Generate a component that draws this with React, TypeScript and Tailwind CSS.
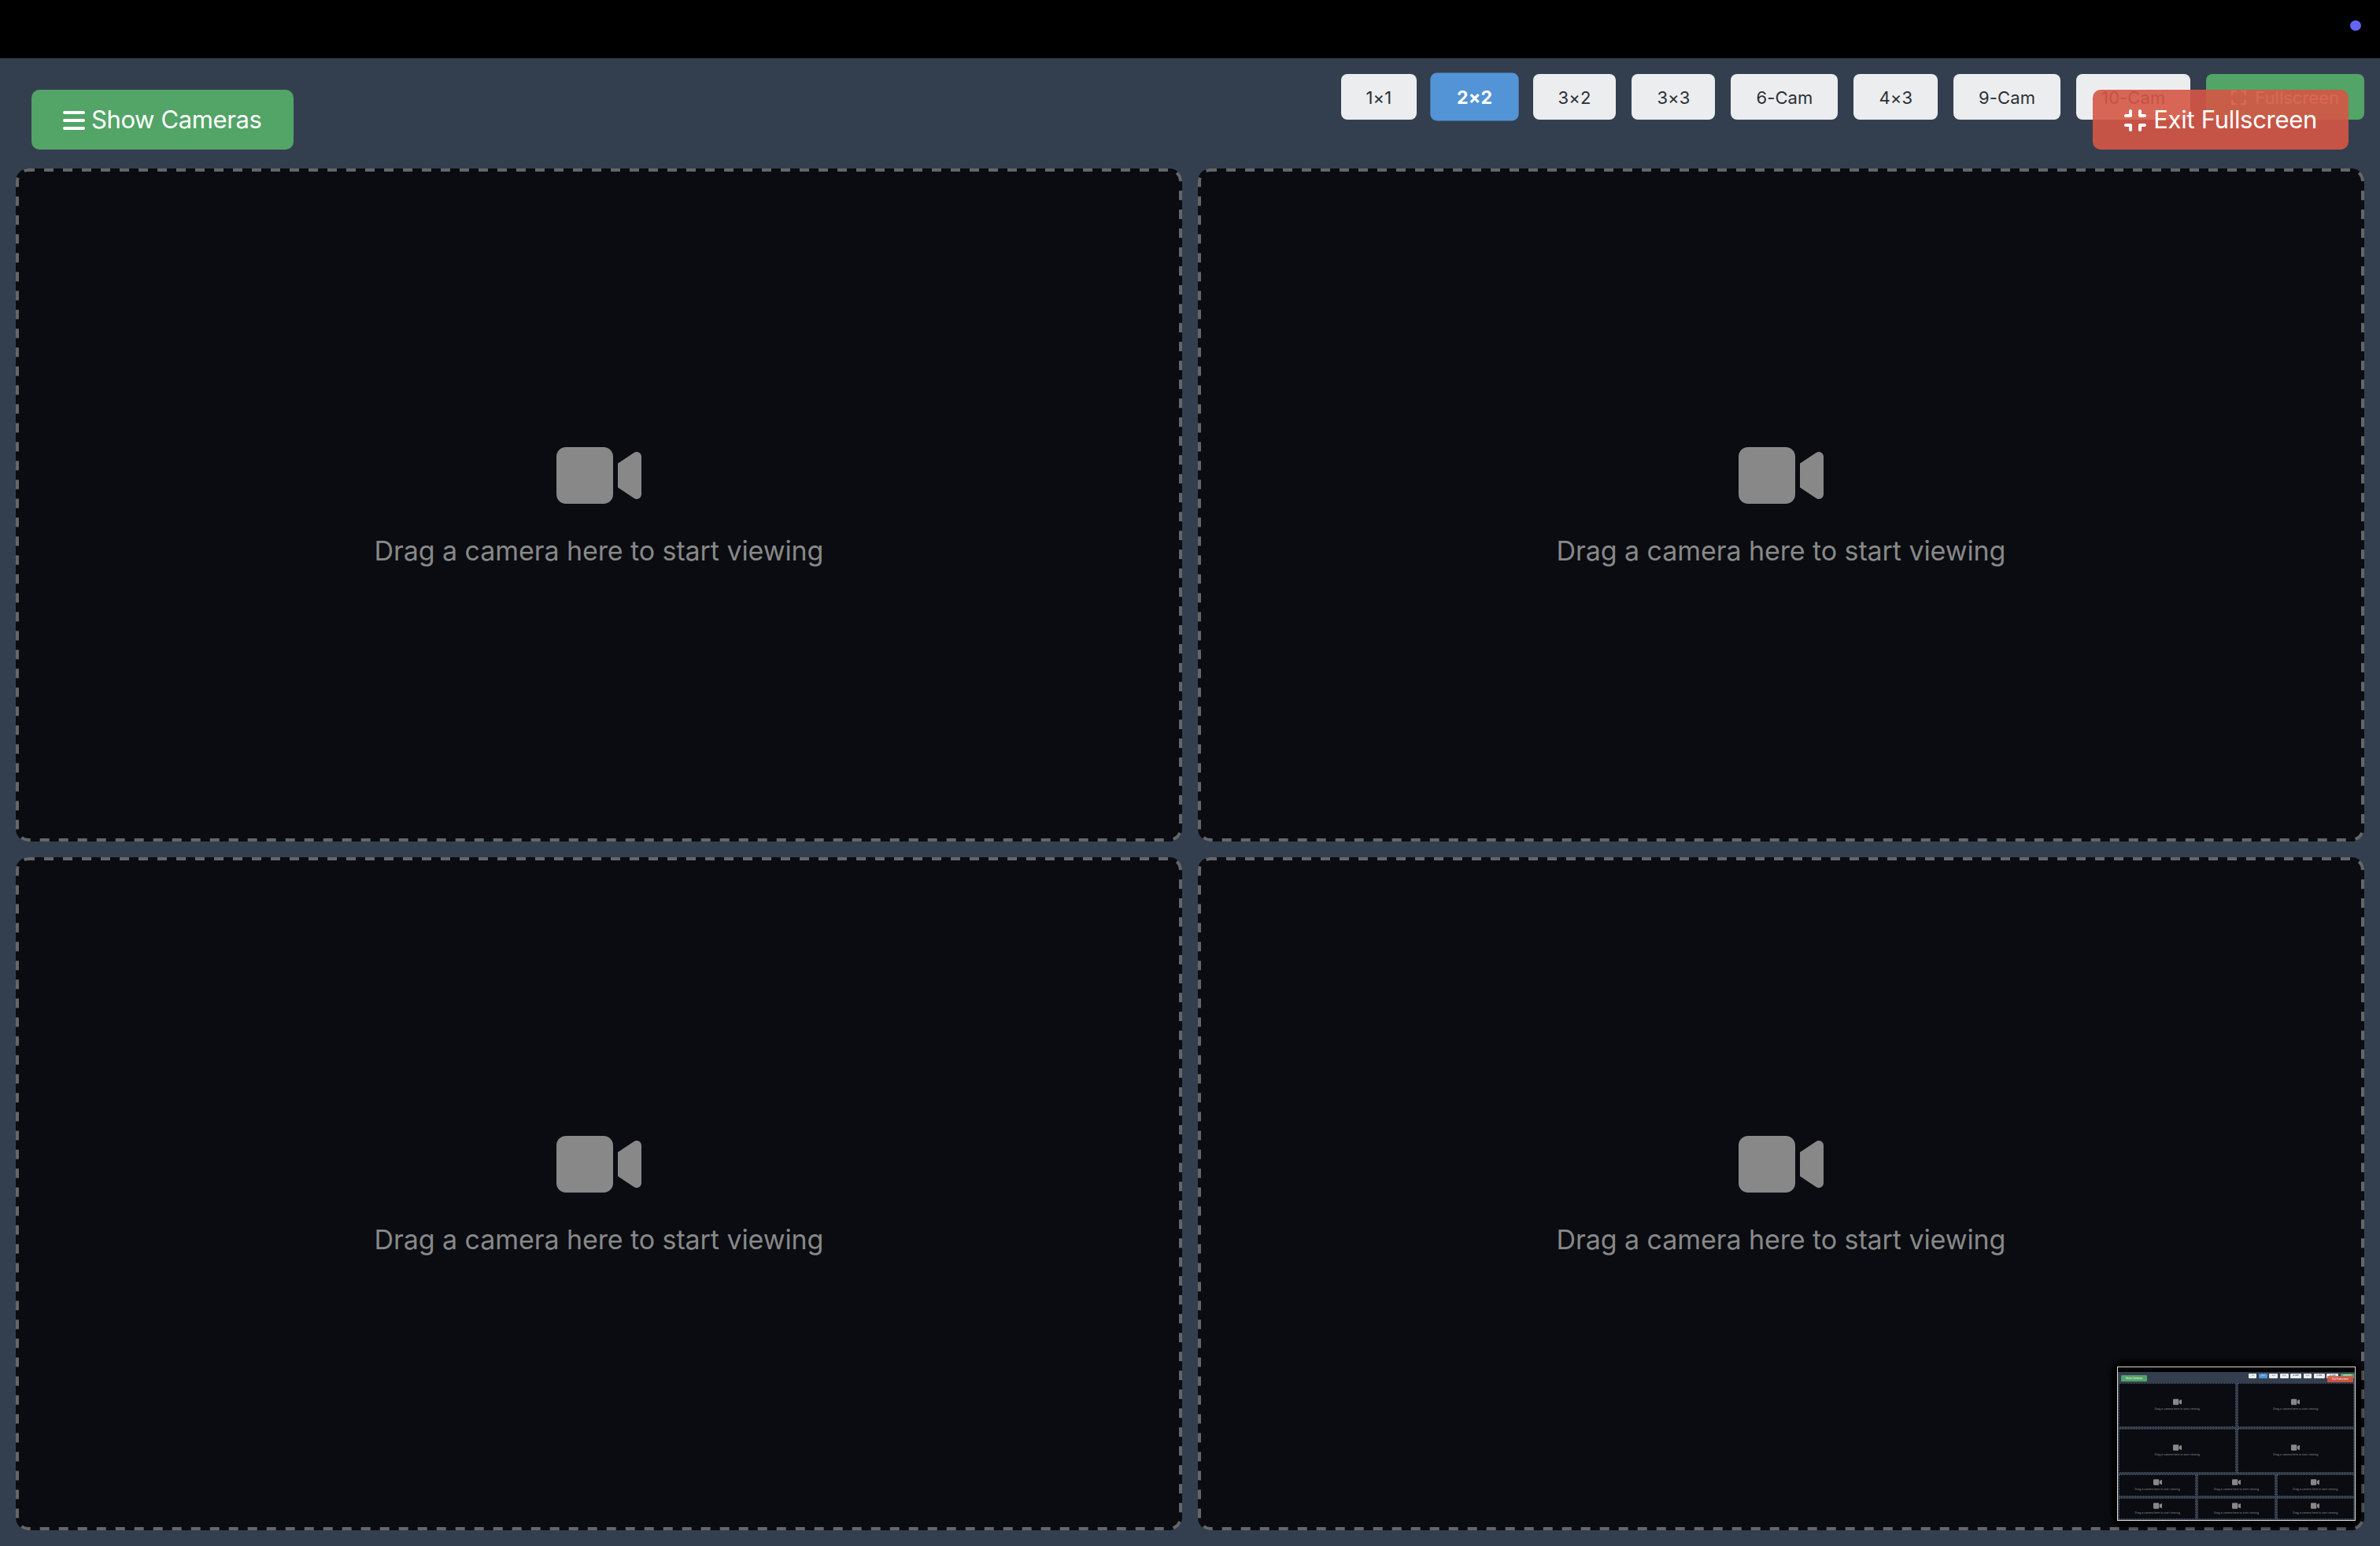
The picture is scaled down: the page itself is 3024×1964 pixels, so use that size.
import { FaBars, FaCompress, FaExpand, FaVideo } from "react-icons/fa6";

const layouts = ["1×1", "2×2", "3×2", "3×3", "6-Cam", "4×3", "9-Cam", "10-Cam"];

function CameraTile() {
  return (
    <div className="relative flex flex-col items-center justify-center rounded-2xl bg-[#0a0c11]">
      {/* dashes are 12 on / 12 off, a plain dashed border draws them too short */}
      <svg className="absolute inset-0 h-full w-full" fill="none">
        <rect x="2" y="2" width="1478" height="851" rx="14" stroke="#666666" strokeWidth="4" strokeDasharray="12 12" strokeDashoffset="4" />
      </svg>
      <FaVideo className="mb-5 h-[96px] w-[108px] text-[#888888]" />
      <span className="text-[34px] leading-[55px] tracking-[-0.08px] text-[#888888]">Drag a camera here to start viewing</span>
    </div>
  );
}

function MiniTile() {
  return (
    <div className="flex flex-col items-center justify-center border border-dotted border-[#555c66] bg-[#0a0c11]">
      <FaVideo className="mb-[2px] h-[10px] w-[11px] text-[#888888]" />
      <span className="text-[3.4px] leading-[5.5px] text-[#888888]">Drag a camera here to start viewing</span>
    </div>
  );
}

function Thumbnail() {
  return (
    <div className="absolute right-6 bottom-[25px] rounded-2xl bg-[#020203] p-[7px] shadow-[0_0_6px_#000000]">
      <div className="relative flex h-[196px] w-[303px] flex-col border-[1.5px] border-[#dddddd] bg-[#333f4f]">
        <div className="h-[6px] bg-black" />
        <div className="flex h-[14px] items-start justify-end gap-[2.7px] pt-[2px] pr-[1px]">
          {layouts.map((name) => (
            <span
              key={name}
              className={`flex h-[6px] items-center rounded-[1px] px-[3.3px] text-[2.2px] ${
                name === "2×2" ? "bg-[#5294d6] text-white" : "bg-[#ecedef] text-[#2b2f36]"
              }`}
            >
              {name}
            </span>
          ))}
          <span className="flex h-[6px] items-center rounded-[1px] bg-[#52a467] px-[3.3px] text-[2.2px] text-white">Fullscreen</span>
        </div>
        <span className="absolute top-[10px] left-[4px] flex h-[8px] w-[33px] items-center justify-center rounded-[1px] bg-[#52a467] text-[3px] text-white">
          Show Cameras
        </span>
        <span className="absolute top-[11px] right-[2px] flex h-[8px] w-[33px] items-center justify-center rounded-[1px] bg-[#d55745]/90 text-[3px] text-white">
          Exit Fullscreen
        </span>
        <div className="flex flex-1 flex-col gap-[2px] px-[1px] pb-[1px]">
          <div className="grid flex-[2] grid-cols-2 grid-rows-2 gap-[2px]">
            <MiniTile />
            <MiniTile />
            <MiniTile />
            <MiniTile />
          </div>
          <div className="grid flex-1 grid-cols-3 grid-rows-2 gap-[2px]">
            <MiniTile />
            <MiniTile />
            <MiniTile />
            <MiniTile />
            <MiniTile />
            <MiniTile />
          </div>
        </div>
      </div>
    </div>
  );
}

export default function App() {
  return (
    <div className="relative flex h-[1964px] w-[3024px] flex-col overflow-hidden bg-[#333f4f] [font-family:Inter,sans-serif]">
      {/* Black strip above the page */}
      <div className="flex h-[74px] justify-end bg-black pt-[26px] pr-6">
        <div className="h-[13px] w-[14px] rounded-full bg-[#6366f1]" />
      </div>

      {/* Layout buttons */}
      <div className="flex h-[140px] items-start justify-end gap-5 pt-5 pr-5">
        {layouts.map((name) =>
          name === "2×2" ? (
            <button key={name} className="h-[58px] scale-105 rounded-lg bg-[#5294d6] px-[32px] pt-[2px] text-[22px] font-bold tracking-[0.2px] text-white">
              {name}
            </button>
          ) : (
            <button key={name} className="h-[58px] rounded-lg bg-[#ecedef] px-[32px] pt-[2px] text-[22px] tracking-[0.1px] text-[#2b2f36]">
              {name}
            </button>
          ),
        )}
        <button className="flex h-[58px] items-center gap-[11px] rounded-lg bg-[#52a467] px-[32px] pt-[2px] text-[22px] text-white">
          <FaExpand className="h-[22px] w-[19px]" />
          Fullscreen
        </button>
      </div>

      {/* Camera grid */}
      <div className="grid flex-1 grid-cols-2 grid-rows-2 gap-5 px-5 pb-5">
        <CameraTile />
        <CameraTile />
        <CameraTile />
        <CameraTile />
      </div>

      {/* Floating controls */}
      <button className="absolute top-[114px] left-10 flex h-[76px] items-center gap-[8px] rounded-[10px] bg-[#52a467] px-10 pt-[1px] text-[31px] tracking-[-0.38px] text-white">
        <FaBars className="h-[32px] w-[28px]" />
        Show Cameras
      </button>
      <button className="absolute top-[114px] right-10 flex h-[76px] items-center gap-[9px] rounded-[10px] bg-[#d55745]/90 px-10 pt-[1px] text-[31px] tracking-[-0.3px] text-white">
        <FaCompress className="h-[32px] w-[28px]" />
        Exit Fullscreen
      </button>

      <Thumbnail />
    </div>
  );
}
